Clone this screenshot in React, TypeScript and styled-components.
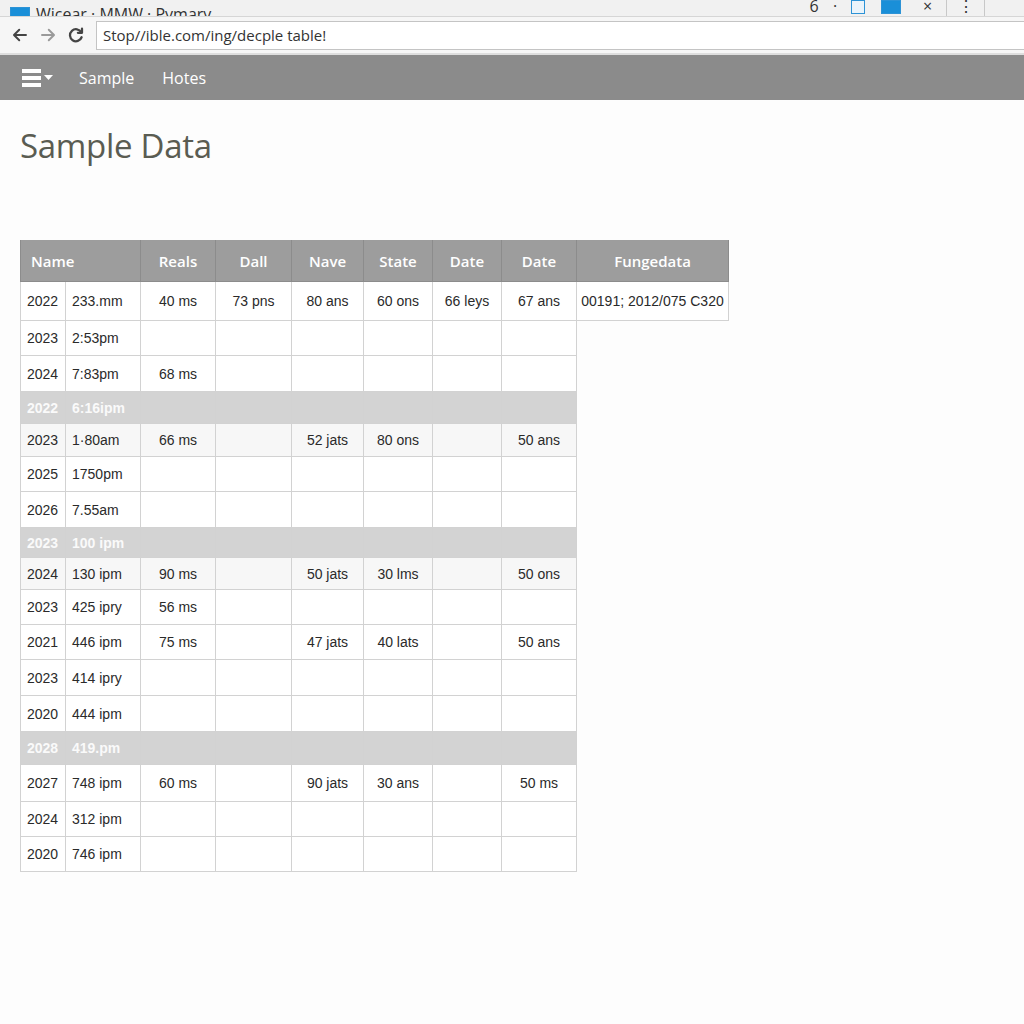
import styled, { createGlobalStyle } from "styled-components";

const GlobalStyle = createGlobalStyle`
  html, body {
    margin: 0;
    padding: 0;
    background: #ffffff;
    font-family: "Open Sans", "Liberation Sans", Arial, sans-serif;
  }
`;

const Page = styled.div`
  width: 1024px;
  height: 1024px;
  overflow: hidden;
  background: #fdfdfd;
`;

const TabStrip = styled.div`
  height: 16px;
  display: flex;
  align-items: flex-end;
  background: #f1f1f1;
  border-bottom: 1px solid #d6d6d6;
  overflow: hidden;
  position: relative;
`;

const TabTitle = styled.div`
  display: flex;
  align-items: center;
  gap: 6px;
  margin-left: 10px;
  margin-bottom: -9px;
  font-size: 16px;
  color: #333;
`;

const TabSquare = styled.span<{ $filled?: boolean }>`
  display: inline-block;
  width: ${(p) => (p.$filled ? "20px" : "14px")};
  height: 14px;
  background: ${(p) => (p.$filled ? "#1a8fd8" : "#eaf4fb")};
  border: 1px solid #2d93d6;
  box-sizing: border-box;
`;

const TabControls = styled.div`
  margin-left: auto;
  display: flex;
  align-items: flex-end;
  height: 16px;
  font-size: 16px;
  color: #333;
`;

const ControlItem = styled.span<{ $w: number; $divider?: boolean }>`
  width: ${(p) => p.$w}px;
  height: 16px;
  display: flex;
  align-items: flex-end;
  justify-content: center;
  overflow: hidden;
  border-right: ${(p) => (p.$divider ? "1px solid #c8c8c8" : "none")};
  line-height: 1;
  padding-bottom: 2px;
  box-sizing: border-box;
`;

const AddressRow = styled.div`
  height: 36px;
  display: flex;
  align-items: center;
  background: #f6f6f6;
  border-bottom: 2px solid #dedede;
  padding-left: 6px;
`;

const NavButton = styled.span<{ $dim?: boolean }>`
  width: 28px;
  height: 28px;
  display: flex;
  align-items: center;
  justify-content: center;
  color: ${(p) => (p.$dim ? "#9a9a9a" : "#444")};
`;

const UrlBox = styled.div`
  margin-left: 6px;
  flex: 1;
  height: 27px;
  background: #fff;
  border: 1px solid #c4c4c4;
  border-right: none;
  display: flex;
  align-items: center;
  padding-left: 6px;
  font-family: "Open Sans", sans-serif;
  font-size: 15px;
  color: #333;
`;

const NavBar = styled.nav`
  height: 45px;
  background: #8b8b8b;
  display: flex;
  align-items: center;
  padding-left: 22px;
`;

const MenuIcon = styled.span`
  display: flex;
  align-items: center;
  margin-right: 25px;
`;

const NavLink = styled.a`
  color: #ffffff;
  font-family: "Open Sans", sans-serif;
  font-size: 16px;
  font-weight: 500;
  margin-right: 28px;
  text-decoration: none;
`;

const Content = styled.main`
  padding: 0 20px;
`;

const Heading = styled.h1`
  margin: 23px 0 71px;
  font-family: "Open Sans", sans-serif;
  font-size: 33px;
  font-weight: 400;
  line-height: 46px;
  color: #5a5c52;
  letter-spacing: -0.3px;
`;

const Table = styled.table`
  border-collapse: collapse;
  table-layout: fixed;
  width: 708px;
  font-family: "Liberation Sans", Arial, sans-serif;
  font-size: 14px;
  color: #2a2a2a;
`;

const HeadCell = styled.th<{ $left?: boolean }>`
  height: 41px;
  padding: 0 ${(p) => (p.$left ? "10px" : "0")};
  background: #9d9d9d;
  color: #ffffff;
  font-family: "Open Sans", sans-serif;
  font-size: 15px;
  font-weight: 600;
  text-align: ${(p) => (p.$left ? "left" : "center")};
  border: 1px solid #8c8c8c;
  border-top: none;
`;

const Row = styled.tr<{ $shaded?: boolean; $tint?: boolean; $h: number }>`
  height: ${(p) => p.$h}px;
  background: ${(p) => (p.$shaded ? "#d3d3d3" : p.$tint ? "#f7f7f7" : "#ffffff")};
  color: ${(p) => (p.$shaded ? "#fafafa" : "#2a2a2a")};
  font-weight: ${(p) => (p.$shaded ? 600 : 400)};
`;

const Cell = styled.td<{ $left?: boolean; $empty?: boolean }>`
  padding: 0 ${(p) => (p.$left ? "6px" : "0")};
  text-align: ${(p) => (p.$left ? "left" : "center")};
  border: ${(p) => (p.$empty ? "none" : "1px solid #d2d2d2")};
  background: ${(p) => (p.$empty ? "#fdfdfd" : "transparent")};
  white-space: nowrap;
`;

const widths = [45, 75, 75, 76, 72, 69, 69, 75, 152];

type DataRow = {
  h: number;
  shaded?: boolean;
  tint?: boolean;
  cells: string[];
};

const rows: DataRow[] = [
  { h: 39, cells: ["2022", "233.mm", "40 ms", "73 pns", "80 ans", "60 ons", "66 leys", "67 ans", "00191; 2012/075 C320"] },
  { h: 35, cells: ["2023", "2:53pm", "", "", "", "", "", ""] },
  { h: 36, cells: ["2024", "7:83pm", "68 ms", "", "", "", "", ""] },
  { h: 32, shaded: true, cells: ["2022", "6:16ipm", "", "", "", "", "", ""] },
  { h: 33, tint: true, cells: ["2023", "1·80am", "66 ms", "", "52 jats", "80 ons", "", "50 ans"] },
  { h: 35, cells: ["2025", "1750pm", "", "", "", "", "", ""] },
  { h: 36, cells: ["2026", "7.55am", "", "", "", "", "", ""] },
  { h: 30, shaded: true, cells: ["2023", "100 ipm", "", "", "", "", "", ""] },
  { h: 32, tint: true, cells: ["2024", "130 ipm", "90 ms", "", "50 jats", "30 lms", "", "50 ons"] },
  { h: 35, cells: ["2023", "425 ipry", "56 ms", "", "", "", "", ""] },
  { h: 35, cells: ["2021", "446 ipm", "75 ms", "", "47 jats", "40 lats", "", "50 ans"] },
  { h: 36, cells: ["2023", "414 ipry", "", "", "", "", "", ""] },
  { h: 36, cells: ["2020", "444 ipm", "", "", "", "", "", ""] },
  { h: 33, shaded: true, cells: ["2028", "419.pm", "", "", "", "", "", ""] },
  { h: 37, cells: ["2027", "748 ipm", "60 ms", "", "90 jats", "30 ans", "", "50 ms"] },
  { h: 35, cells: ["2024", "312 ipm", "", "", "", "", "", ""] },
  { h: 35, cells: ["2020", "746 ipm", "", "", "", "", "", ""] },
];

const headers = ["Reals", "Dall", "Nave", "State", "Date", "Date", "Fungedata"];

const ArrowLeft = () => (
  <svg width="18" height="18" viewBox="0 0 24 24" fill="none" stroke="currentColor" strokeWidth="2.6" strokeLinecap="round" strokeLinejoin="round">
    <path d="M20 12H5M11 5l-7 7 7 7" />
  </svg>
);

const ArrowRight = () => (
  <svg width="18" height="18" viewBox="0 0 24 24" fill="none" stroke="currentColor" strokeWidth="2.6" strokeLinecap="round" strokeLinejoin="round">
    <path d="M4 12h15M13 5l7 7-7 7" />
  </svg>
);

const Reload = () => (
  <svg width="18" height="18" viewBox="0 0 24 24" fill="none" stroke="currentColor" strokeWidth="3" strokeLinecap="round">
    <path d="M19 8.5A8 8 0 1 0 19.5 15" />
    <path d="M20 3.5V9h-5.5" strokeLinejoin="round" />
  </svg>
);

const Hamburger = () => (
  <svg width="32" height="20" viewBox="0 0 32 20">
    <rect x="0" y="1" width="19" height="4" fill="#fff" />
    <rect x="0" y="8" width="19" height="4" fill="#fff" />
    <rect x="0" y="15" width="19" height="4" fill="#fff" />
    <path d="M22 7h9l-4.5 5z" fill="#fff" />
  </svg>
);

export default function App() {
  return (
    <Page>
      <GlobalStyle />
      <TabStrip>
        <TabTitle>
          <TabSquare $filled />
          <span>Wicear · MMW · Pymary</span>
        </TabTitle>
        <TabControls>
          <ControlItem $w={26}>6</ControlItem>
          <ControlItem $w={16}>·</ControlItem>
          <ControlItem $w={30}>
            <TabSquare />
          </ControlItem>
          <ControlItem $w={36}>
            <TabSquare $filled />
          </ControlItem>
          <ControlItem $w={38} $divider>
            ×
          </ControlItem>
          <ControlItem $w={38} $divider>
            ⋮
          </ControlItem>
          <ControlItem $w={39} />
        </TabControls>
      </TabStrip>
      <AddressRow>
        <NavButton>
          <ArrowLeft />
        </NavButton>
        <NavButton $dim>
          <ArrowRight />
        </NavButton>
        <NavButton>
          <Reload />
        </NavButton>
        <UrlBox>Stop//ible.com/ing/decple table!</UrlBox>
      </AddressRow>
      <NavBar>
        <MenuIcon>
          <Hamburger />
        </MenuIcon>
        <NavLink>Sample</NavLink>
        <NavLink>Hotes</NavLink>
      </NavBar>
      <Content>
        <Heading>Sample Data</Heading>
        <Table>
          <colgroup>
            {widths.map((w, i) => (
              <col key={i} style={{ width: w }} />
            ))}
          </colgroup>
          <thead>
            <tr>
              <HeadCell colSpan={2} $left>
                Name
              </HeadCell>
              {headers.map((h, i) => (
                <HeadCell key={i}>{h}</HeadCell>
              ))}
            </tr>
          </thead>
          <tbody>
            {rows.map((row, ri) => (
              <Row key={ri} $h={row.h} $shaded={row.shaded} $tint={row.tint}>
                {row.cells.map((c, ci) => (
                  <Cell key={ci} $left={ci < 2}>
                    {c}
                  </Cell>
                ))}
                {row.cells.length < 9 && <Cell $empty />}
              </Row>
            ))}
          </tbody>
        </Table>
      </Content>
    </Page>
  );
}
